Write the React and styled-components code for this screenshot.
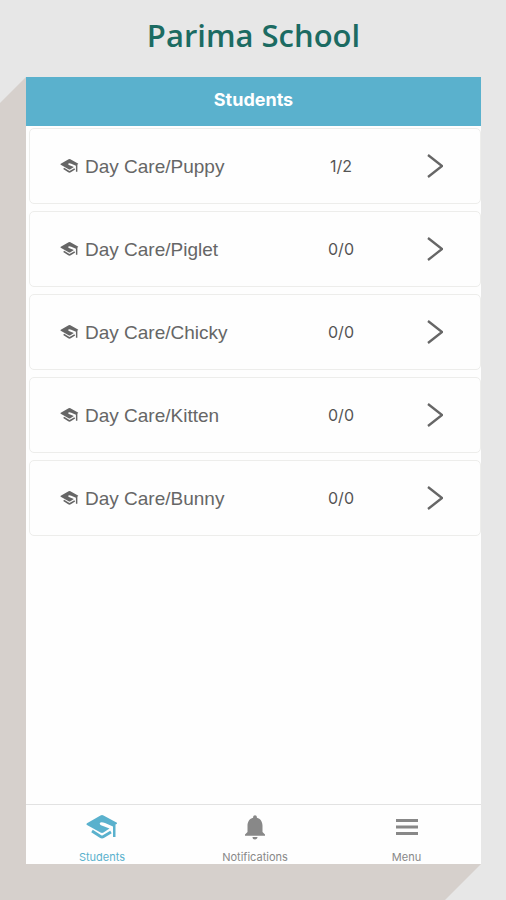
import React from "react";
import styled, { createGlobalStyle } from "styled-components";
import { MdNotifications } from "react-icons/md";

const classes = [
  { name: "Day Care/Puppy", count: "1/2" },
  { name: "Day Care/Piglet", count: "0/0" },
  { name: "Day Care/Chicky", count: "0/0" },
  { name: "Day Care/Kitten", count: "0/0" },
  { name: "Day Care/Bunny", count: "0/0" },
];

function CapIcon({ width, height }) {
  return (
    <svg width={width} height={height} viewBox="0 0 32 24" aria-hidden="true">
      <path
        fill="currentColor"
        d="M14.500 0.500 Q16 -0.300 17.500 0.500 L30.500 7.500 Q31.500 8.200 30.500 9 L29.500 9.500 V22 H27 V11.500 L19 8 Q14.500 6.500 13.800 8.300 Q13.500 9.500 15 10.200 L23.500 13.500 L17.500 17.500 Q16 18.300 14.500 17.500 L1 10 Q0 9.200 1 8.300 Z"
      />
      <path
        fill="none"
        stroke="currentColor"
        strokeWidth="2.800"
        d="M6 16 L14.500 21.500 Q16 22.500 17.500 21.500 L25 17"
      />
    </svg>
  );
}

function ArrowIcon() {
  return (
    <svg width="16" height="24" viewBox="0 0 16 24" aria-hidden="true">
      <path
        fill="none"
        stroke="currentColor"
        strokeWidth="2.300"
        d="M1 1 L15 12 L1 23"
      />
    </svg>
  );
}

function MenuIcon() {
  return (
    <svg width="22" height="16" viewBox="0 0 22 16" aria-hidden="true">
      <path
        stroke="currentColor"
        strokeWidth="3"
        d="M0 1.500 H22 M0 8 H22 M0 14.500 H22"
      />
    </svg>
  );
}

function App() {
  return (
    <Page>
      <GlobalStyle />
      <Title>Parima School</Title>
      <Screen>
        <Header>Students</Header>
        <List>
          {classes.map((item) => {
            return (
              <li key={item.name}>
                <Row type="button">
                  <CapIcon width="19" height="14" />
                  <Name>{item.name}</Name>
                  <Count>{item.count}</Count>
                  <ArrowIcon />
                </Row>
              </li>
            );
          })}
        </List>
        <TabBar>
          <Tab type="button" $active>
            <CapIcon width="32" height="24" />
            <span>Students</span>
          </Tab>
          <Tab type="button">
            <MdNotifications size={30} />
            <span>Notifications</span>
          </Tab>
          <Tab type="button">
            <MenuIcon />
            <span>Menu</span>
          </Tab>
        </TabBar>
      </Screen>
    </Page>
  );
}

const GlobalStyle = createGlobalStyle`
  * {
    box-sizing: border-box;
  }
  body {
    margin: 0;
    background: #e7e7e7;
  }
`;

const Page = styled.div`
  min-height: 100vh;
  display: flex;
  flex-direction: column;
  padding: 0 25px 36px 26px;
  overflow: hidden;
`;

const Title = styled.h1`
  margin: 0;
  padding: 15px 0 22px;
  text-align: center;
  font-family: "Open Sans", sans-serif;
  font-size: 31px;
  font-weight: 600;
  line-height: 40px;
  color: #1c6b62;
`;

const Screen = styled.main`
  position: relative;
  flex: 1;
  display: flex;
  flex-direction: column;
  background: #fefefe;
  /* long slanted shadow down to the left */
  &::before {
    content: "";
    position: absolute;
    z-index: -1;
    inset: 0 0 -36px -26px;
    background: #d6d0cc;
    clip-path: polygon(
      26px 0,
      100% calc(100% - 36px),
      calc(100% - 36px) 100%,
      0 100%,
      0 26px
    );
  }
`;

const Header = styled.h2`
  margin: 0;
  padding: 10px 0 14px;
  text-align: center;
  font-family: Inter, sans-serif;
  font-size: 18px;
  font-weight: 700;
  line-height: 25px;
  color: #fff;
  background: #5ab1cd;
`;

const List = styled.ul`
  flex: 1;
  display: flex;
  flex-direction: column;
  gap: 7px;
  margin: 0;
  padding: 2px 0 0 3px;
  list-style: none;
`;

const Row = styled.button`
  width: 100%;
  height: 76px;
  display: grid;
  grid-template-columns: 19px 1fr 26px 16px;
  align-items: center;
  padding: 0 37px 0 30px;
  text-align: left;
  color: #666;
  background: #fefefe;
  border: 1px solid #ededeb;
  border-radius: 5px;
  cursor: pointer;
`;

const Name = styled.span`
  padding: 2px 0 0 6px;
  font-family: "Liberation Sans", sans-serif;
  font-size: 19px;
`;

const Count = styled.span`
  justify-self: end;
  width: 26px;
  margin-right: 73px;
  text-align: center;
  font-family: Inter, sans-serif;
  font-size: 16px;
  color: #555;
`;

const TabBar = styled.nav`
  display: grid;
  grid-template-columns: 152fr 154fr 149fr;
  height: 60px;
  border-top: 1px solid #e2e2e2;
`;

const Tab = styled.button`
  display: grid;
  grid-template-rows: 44px 16px;
  place-items: center;
  padding: 0;
  border: none;
  background: transparent;
  font-family: Inter, sans-serif;
  font-size: 11px;
  line-height: 14px;
  color: ${({ $active }) => ($active ? "#5ab1cd" : "#888")};
  cursor: pointer;
`;

export default App;
